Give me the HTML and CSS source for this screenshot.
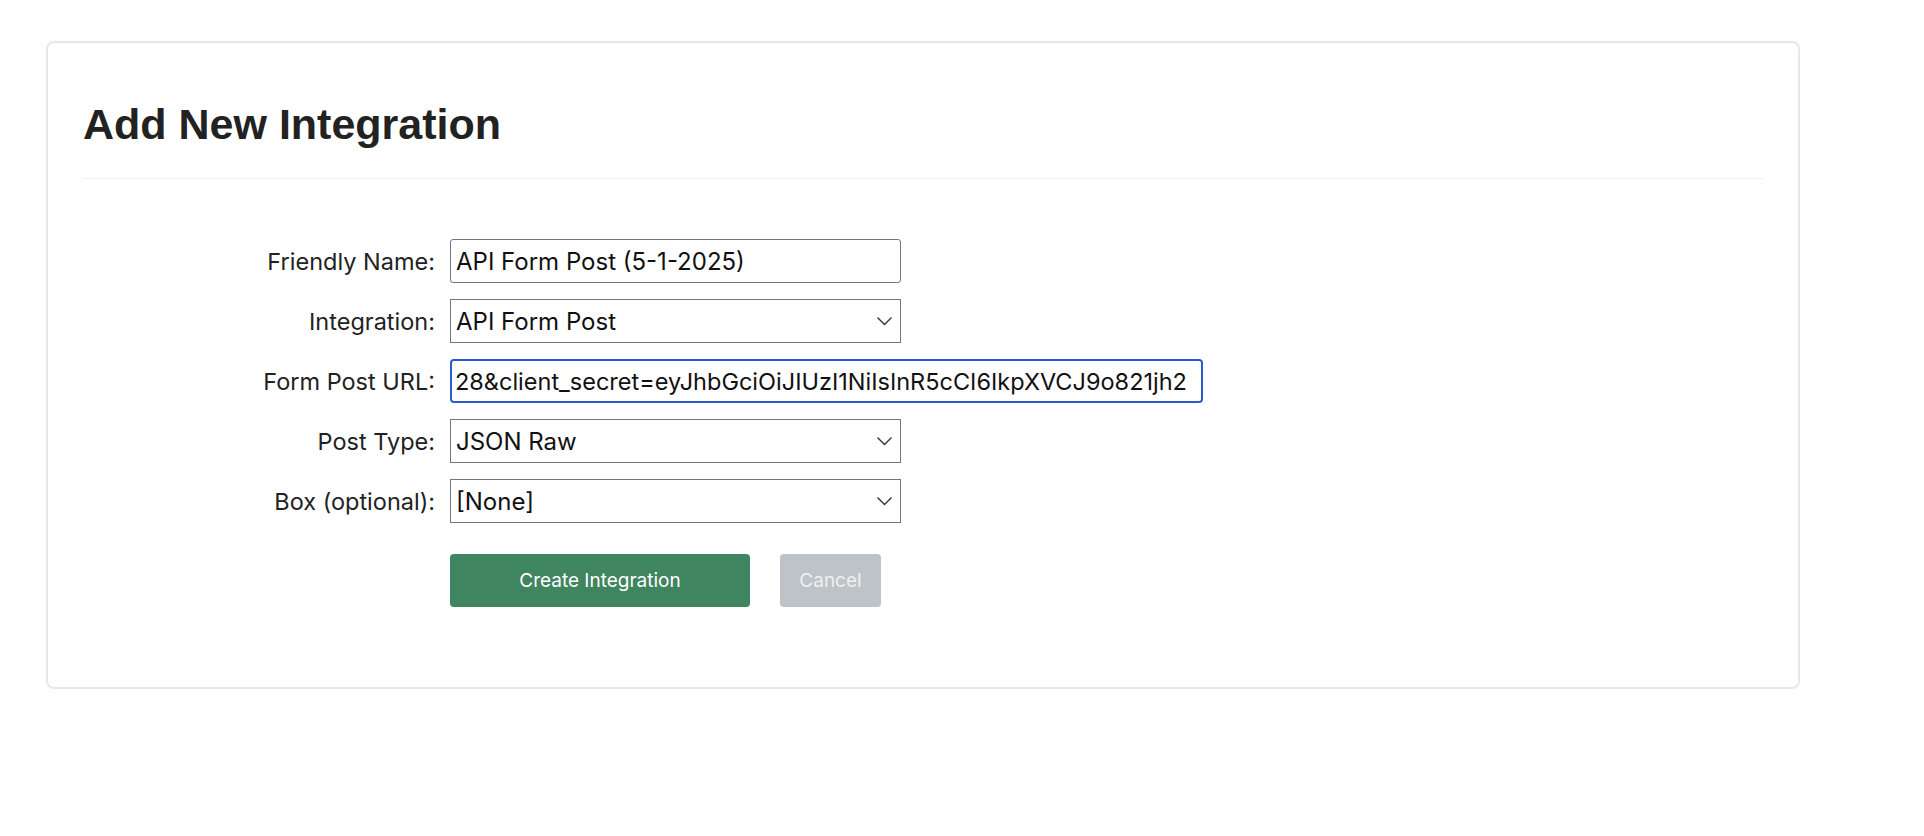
FILE: index.html
```html
<!DOCTYPE html>
<html lang="en">
<head>
    <meta charset="UTF-8">
    <meta name="viewport" content="width=device-width, initial-scale=1.0">
    <title>Add New Integration</title>
    <link rel="stylesheet" href="styles.css">
</head>
<body>
    <div class="card">
        <h1 class="card-title">Add New Integration</h1>
        <form class="integration-form" onsubmit="return false">
            <label for="friendlyName">Friendly Name:</label>
            <div class="field">
                <input type="text" id="friendlyName" class="input" value="API Form Post (5-1-2025)">
            </div>

            <label for="integration">Integration:</label>
            <div class="field select-wrap">
                <select id="integration" class="input">
                    <option>API Form Post</option>
                </select>
                <svg class="chevron" viewBox="0 0 16 10" width="17" height="10"><path d="M1 1.5 L8 8.5 L15 1.5" fill="none" stroke="#333" stroke-width="1.4"/></svg>
            </div>

            <label for="postUrl">Form Post URL:</label>
            <div class="field">
                <input type="text" id="postUrl" class="input input-url input-focus" value="28&amp;client_secret=eyJhbGciOiJIUzI1NiIsInR5cCI6IkpXVCJ9o821jh2">
            </div>

            <label for="postType">Post Type:</label>
            <div class="field select-wrap">
                <select id="postType" class="input">
                    <option>JSON Raw</option>
                </select>
                <svg class="chevron" viewBox="0 0 16 10" width="17" height="10"><path d="M1 1.5 L8 8.5 L15 1.5" fill="none" stroke="#333" stroke-width="1.4"/></svg>
            </div>

            <label for="box">Box (optional):</label>
            <div class="field select-wrap">
                <select id="box" class="input">
                    <option>[None]</option>
                </select>
                <svg class="chevron" viewBox="0 0 16 10" width="17" height="10"><path d="M1 1.5 L8 8.5 L15 1.5" fill="none" stroke="#333" stroke-width="1.4"/></svg>
            </div>

            <div></div>
            <div class="actions">
                <button type="submit" class="btn btn-primary">Create Integration</button>
                <button type="button" class="btn btn-cancel">Cancel</button>
            </div>
        </form>
    </div>
</body>
</html>
```

FILE: styles.css
```css
body {
    margin: 0;
    padding: 41px 0 0 46px;
    background-color: #fefefe;
    font-family: Inter, "Noto Sans", sans-serif;
    color: #222;
}
.card {
    width: 1680px;
    padding: 58px 35px 80px 35px;
    border: 2px solid #e4e8e7;
    border-radius: 8px;
    background-color: #fff;
}
.card-title {
    margin: 0;
    padding-bottom: 30px;
    border-bottom: 1px solid #efefef;
    font-family: "Liberation Sans", Arial, sans-serif;
    font-size: 43px;
    font-weight: bold;
    line-height: 47px;
    color: #222;
}
.integration-form {
    display: grid;
    grid-template-columns: 352px auto;
    column-gap: 15px;
    row-gap: 16px;
    align-items: center;
    margin-top: 60px;
}
.integration-form label {
    text-align: right;
    font-size: 23.5px;
    color: #222;
}
.field {
    display: flex;
}
.input {
    box-sizing: border-box;
    width: 451px;
    height: 44px;
    padding: 0 5px;
    border: 1px solid #767676;
    border-radius: 3px;
    background-color: #fff;
    font-family: Inter, "Noto Sans", sans-serif;
    font-size: 24px;
    color: #111;
}
.input-url {
    width: 753px;
    padding: 0 3px;
    font-size: 23.5px;
}
.input-focus {
    border: 2px solid #2a5ad1;
    border-radius: 4px;
}
.select-wrap {
    position: relative;
    width: 451px;
}
.select-wrap select {
    appearance: none;
    border-radius: 0;
}
.chevron {
    position: absolute;
    right: 8px;
    top: 17px;
    pointer-events: none;
}
.actions {
    display: flex;
    gap: 30px;
    margin-top: 15px;
}
.btn {
    height: 53px;
    border: none;
    border-radius: 4px;
    font-family: Inter, "Noto Sans", sans-serif;
    font-size: 19px;
    cursor: pointer;
}
.btn-primary {
    width: 300px;
    background-color: #3f8560;
    color: #fff;
}
.btn-cancel {
    width: 101px;
    background-color: #bec3c7;
    color: #eef0f2;
}
```
